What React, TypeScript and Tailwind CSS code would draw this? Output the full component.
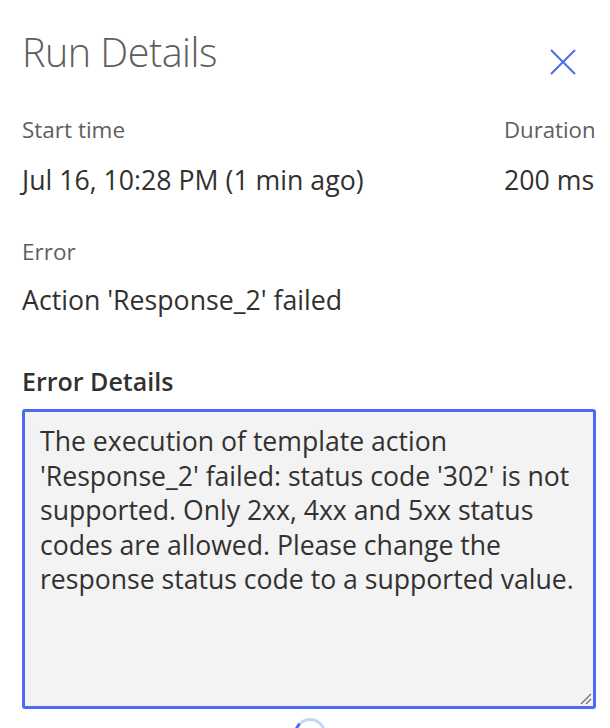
const font = { fontFamily: '"Open Sans", "Noto Sans", sans-serif' };

export default function App() {
  return (
    <div
      className="w-[610px] h-[728px] overflow-hidden bg-white pl-[22px] pr-[14px] pt-[26px] text-[#323130] relative"
      style={font}
    >
      {/* header */}
      <div className="flex items-start justify-between">
        <h1 className="text-[39.5px] font-light leading-[52px] text-[#605e5c] tracking-[-0.5px]">
          Run Details
        </h1>
        <button type="button" className="mt-[23px] mr-[20px] text-[#4f6bed]">
          <svg width="26" height="26" viewBox="0 0 26 26" className="block">
            <path d="M1 1 L25 25 M25 1 L1 25" stroke="#4f6bed" strokeWidth="2" />
          </svg>
        </button>
      </div>

      {/* start time / duration */}
      <div className="mt-[38px] flex justify-between">
        <div>
          <div className="text-[22.5px] leading-[28px] text-[#605e5c]">Start time</div>
          <div className="mt-[20px] text-[26.7px] leading-[32px]">Jul 16, 10:28 PM (1 min ago)</div>
        </div>
        <div className="w-[92px]">
          <div className="text-[22.2px] leading-[28px] text-[#605e5c]">Duration</div>
          <div className="mt-[20px] text-[26.7px] leading-[32px]">200 ms</div>
        </div>
      </div>

      {/* error */}
      <div className="mt-[42px] text-[22.5px] leading-[28px] text-[#605e5c]">Error</div>
      <div className="mt-[18px] text-[26.7px] leading-[32px]">Action 'Response_2' failed</div>

      {/* error details */}
      <div className="mt-[50px] text-[25px] leading-[30px] font-semibold">Error Details</div>
      <div className="relative mt-[13px] h-[300px] rounded-[3px] border-[3px] border-[#4a6cf5] bg-[#f3f3f3] px-[15px] pt-[12px] text-[26.6px] leading-[34.5px] whitespace-nowrap">
        The execution of template action
        <br />
        'Response_2' failed: status code '302' is not
        <br />
        supported. Only 2xx, 4xx and 5xx status
        <br />
        codes are allowed. Please change the
        <br />
        response status code to a supported value.
        <svg
          className="absolute right-[1px] bottom-[1px]"
          width="14"
          height="14"
          viewBox="0 0 14 14"
        >
          <path d="M13 3 L3 13 M13 8 L8 13" stroke="#6b6b6b" strokeWidth="1.2" />
        </svg>
      </div>

      {/* loading spinner */}
      <div className="absolute left-[294px] top-[718px] h-[32px] w-[32px] rounded-full border-[3px] border-[#c7d4f7] border-l-[#4a6cf5]" />
    </div>
  );
}
